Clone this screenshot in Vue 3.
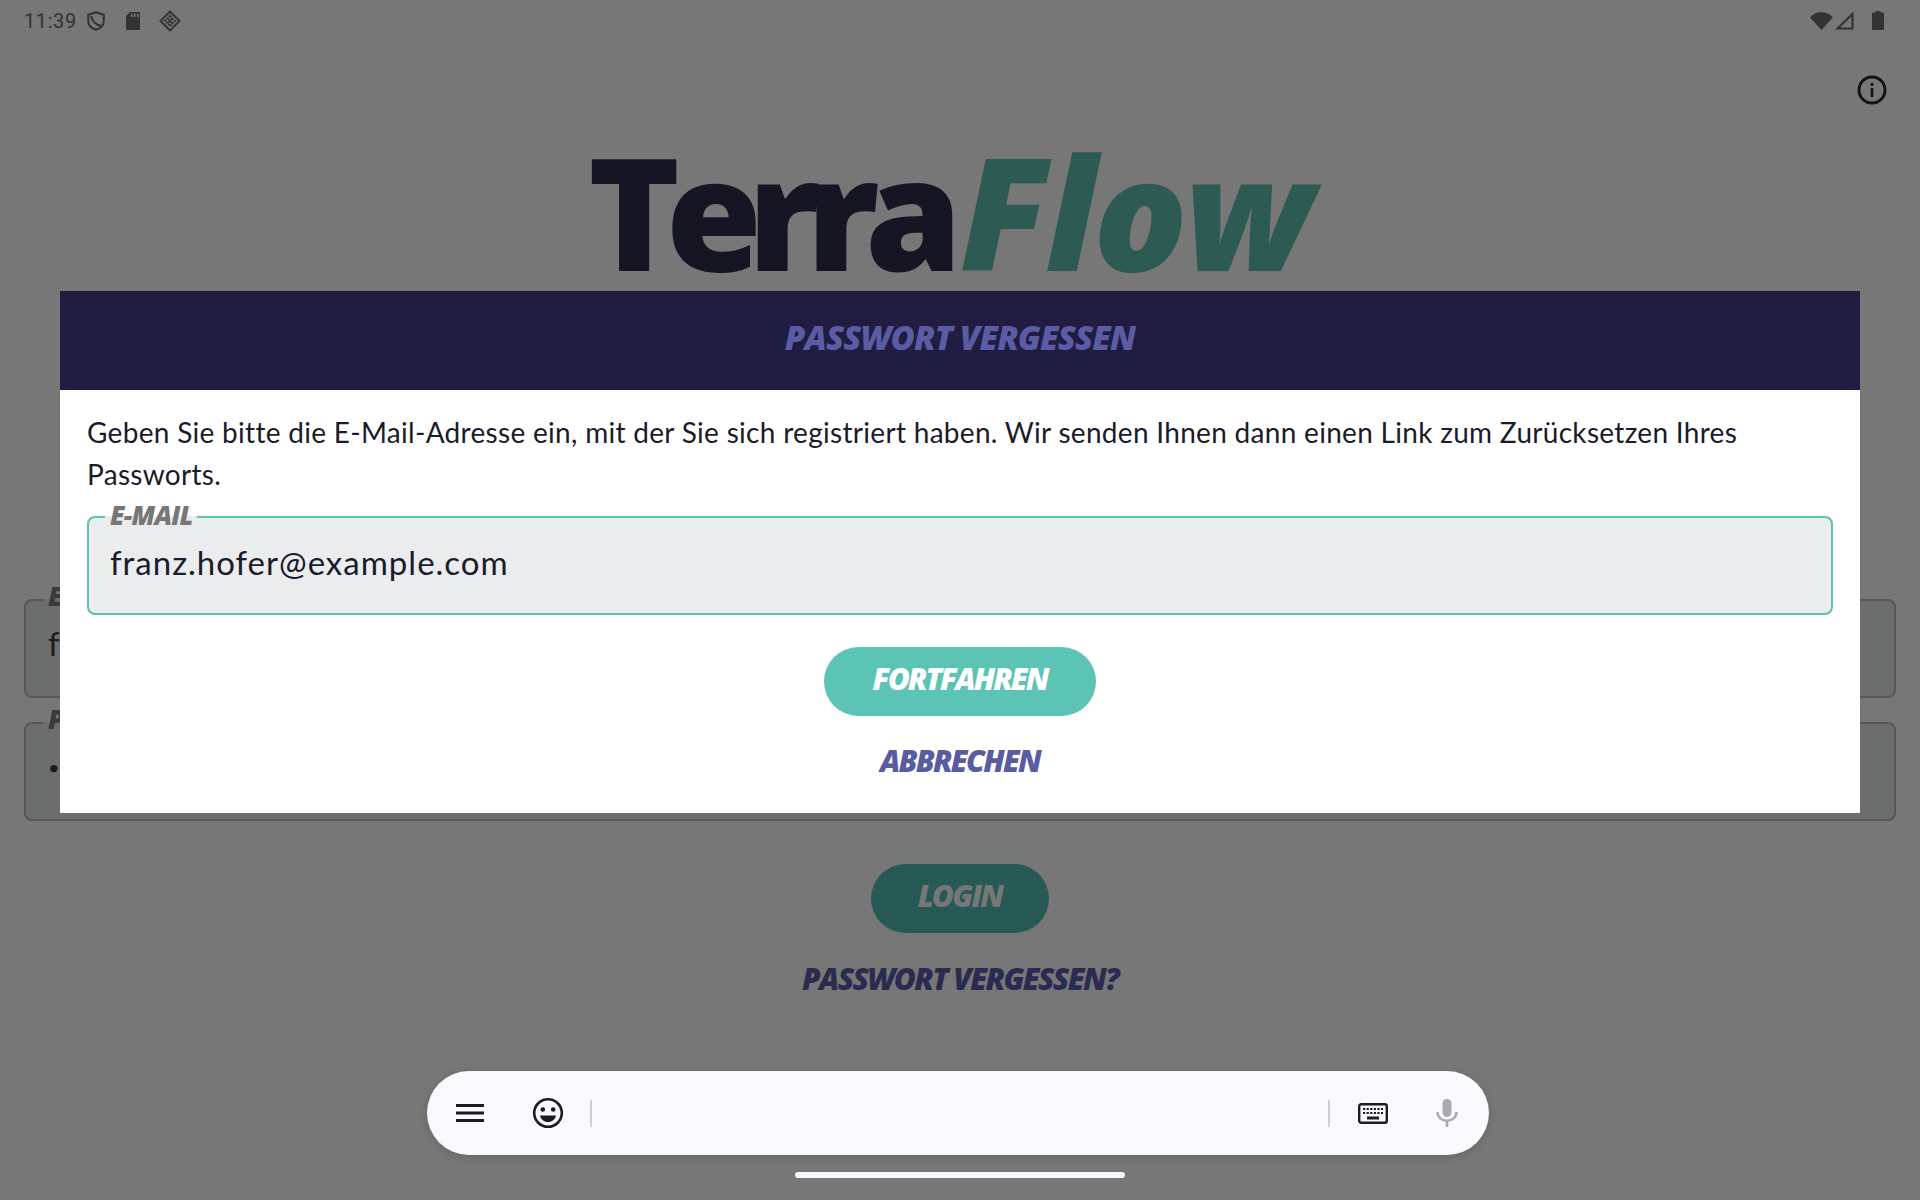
<template>
  <div class="screen">
    <div class="status-bar">
      <span class="time">11:39</span>
      <svg class="st-shield" viewBox="0 0 18 20" width="18" height="20">
        <path d="M9 1.200 16.800 3.800v6.200c0 4.300-3.200 7.500-7.800 8.800C4.400 17.500 1.200 14.300 1.200 10V3.800Z" fill="none" stroke="#333" stroke-width="2" />
        <path d="M4.200 5C5 10 9 14 14.500 15" fill="none" stroke="#333" stroke-width="2" />
      </svg>
      <svg class="st-sd" viewBox="0 0 16 20" width="16" height="20">
        <path d="M5 1h10v18H1V5Z" fill="#333" />
        <rect x="6" y="2.500" width="1.600" height="3.500" fill="#777" />
        <rect x="9" y="2.500" width="1.600" height="3.500" fill="#777" />
        <rect x="12" y="2.500" width="1.600" height="3.500" fill="#777" />
      </svg>
      <svg class="st-diamond" viewBox="0 0 22 22" width="22" height="22">
        <path d="M11 1.500 20.500 11 11 20.500 1.500 11Z" fill="none" stroke="#333" stroke-width="2" stroke-linejoin="round" />
        <path d="M11 6 16 11 11 16 6 11Z" fill="none" stroke="#333" stroke-width="2" stroke-dasharray="2 1" />
        <path d="M8.500 8.500 13.500 13.500M13.500 8.500 8.500 13.500" stroke="#333" stroke-width="1.500" />
      </svg>
      <div class="spacer"></div>
      <svg viewBox="0 0 23 18" width="23" height="18">
        <path d="M0 5.500C3 2 7 .2 11.500 .2S20 2 23 5.500L11.500 18Z" fill="#333" />
      </svg>
      <svg class="st-signal" viewBox="0 0 19 18" width="19" height="18">
        <path d="M17.500 2v14.500H2.500Z" fill="none" stroke="#333" stroke-width="2.200" />
      </svg>
      <svg class="st-battery" viewBox="0 0 12 19" width="12" height="19">
        <path d="M3.500 0h5v1.500H11a1 1 0 0 1 1 1V18a1 1 0 0 1-1 1H1a1 1 0 0 1-1-1V2.500a1 1 0 0 1 1-1h2.500Z" fill="#333" />
      </svg>
    </div>

    <div class="info-row">
      <svg viewBox="0 0 30 30" width="30" height="30">
        <circle cx="15" cy="15" r="13" fill="none" stroke="#111" stroke-width="2.800" />
        <rect x="13.700" y="13" width="2.600" height="9" fill="#111" />
        <rect x="13.700" y="8" width="2.600" height="2.800" fill="#111" />
      </svg>
    </div>

    <div class="logo">
      <span class="terra">Terra</span><span class="flow">Flow</span>
    </div>

    <div class="fields">
      <fieldset class="bg-field">
        <legend>E-MAIL</legend>
        <span>franz.hofer@example.com</span>
      </fieldset>
      <fieldset class="bg-field">
        <legend>PASSWORT</legend>
        <span class="dots">••••••••</span>
      </fieldset>
    </div>

    <button class="login">LOGIN</button>
    <a class="forgot">PASSWORT VERGESSEN?</a>

    <div class="modal">
      <div class="modal-head">PASSWORT VERGESSEN</div>
      <div class="modal-body">
        <p>Geben Sie bitte die E-Mail-Adresse ein, mit der Sie sich registriert haben. Wir senden Ihnen dann einen Link zum Zurücksetzen Ihres Passworts.</p>
        <fieldset class="field">
          <legend>E-MAIL</legend>
          <span>franz.hofer@example.com</span>
        </fieldset>
        <button class="primary">FORTFAHREN</button>
        <a class="cancel">ABBRECHEN</a>
      </div>
    </div>

    <div class="ime-bar">
      <svg class="ime-menu" viewBox="0 0 28 18" width="28" height="18">
        <path d="M0 1.500h28M0 9h28M0 16.500h28" stroke="#1b1b26" stroke-width="3" />
      </svg>
      <svg class="ime-emoji" viewBox="0 0 32 32" width="32" height="32">
        <circle cx="16" cy="16" r="13.800" fill="none" stroke="#1b1b26" stroke-width="2.600" />
        <circle cx="10.800" cy="12.500" r="2.300" fill="#1b1b26" />
        <circle cx="21.200" cy="12.500" r="2.300" fill="#1b1b26" />
        <path d="M8 18.500h16c-.8 4-4 6.500-8 6.500s-7.200-2.500-8-6.500Z" fill="#1b1b26" />
      </svg>
      <span class="ime-sep first"></span>
      <div class="spacer"></div>
      <span class="ime-sep"></span>
      <svg class="ime-kbd" viewBox="0 0 30 21" width="30" height="21">
        <rect x="1.200" y="1.200" width="27.600" height="18.600" rx="2" fill="none" stroke="#1b1b26" stroke-width="2.400" />
        <path d="M5 6h20M5 10h20" stroke="#1b1b26" stroke-width="2.200" stroke-dasharray="2.200 1.400" />
        <rect x="9" y="13.500" width="12" height="3" fill="#1b1b26" />
      </svg>
      <svg class="ime-mic" viewBox="0 0 22 28" width="22" height="28">
        <rect x="6.500" y="0" width="9" height="18" rx="4.500" fill="#a9a9b0" />
        <path d="M1.500 13c0 5.200 4.200 8.800 9.500 8.800s9.500-3.600 9.500-8.800" fill="none" stroke="#a9a9b0" stroke-width="2.400" />
        <rect x="9.700" y="21" width="2.600" height="7" fill="#a9a9b0" />
      </svg>
    </div>
    <div class="home-bar"></div>
  </div>
</template>

<script setup>
</script>

<style>
html, body {
  margin: 0;
  padding: 0;
}
</style>

<style scoped>
.screen {
  position: relative;
  width: 1920px;
  height: 1200px;
  overflow: hidden;
  background: #777;
  display: flex;
  flex-direction: column;
  font-family: "Lato", sans-serif;
}

.spacer { flex: 1; }

/* status bar */
.status-bar {
  height: 42px;
  display: flex;
  align-items: center;
  padding: 0 36px 0 24px;
  color: #333;
}
.time {
  font-family: "Roboto", sans-serif;
  font-size: 20px;
  letter-spacing: 0.6px;
  margin-right: 10px;
}
.st-sd { margin-left: 20px; }
.st-diamond { margin-left: 18px; }
.st-signal { margin-left: 2px; }
.st-battery { margin-left: 18px; margin-top: -2px; }

.info-row {
  display: flex;
  justify-content: flex-end;
  padding: 33px 33px 0 0;
  height: 30px;
}

.logo {
  margin-top: 27px;
  margin-left: 588px;
  height: 158px;
  display: flex;
  align-items: center;
  font-family: "Open Sans", sans-serif;
  font-weight: 800;
  font-size: 156px;
  line-height: 158px;
  white-space: nowrap;
}
.terra {
  color: #161524;
  letter-spacing: -14.500px;
}
.flow {
  color: #2d5a53;
  font-style: italic;
  letter-spacing: -3px;
  margin-left: 12px;
}

/* form behind the dialog */
.fields {
  margin: 0 24px;
  padding-top: 297px;
  display: flex;
  flex-direction: column;
  gap: 12px;
}
.bg-field {
  margin: 0;
  height: 111px;
  box-sizing: border-box;
  padding: 11px 22px 0;
  border: 2px solid #575757;
  border-radius: 8px;
  background: #6c6e6d;
  color: #1c1c1c;
  font-size: 33px;
}
.bg-field legend {
  padding: 0 5px;
  margin-left: -5px;
  font-family: "Open Sans", sans-serif;
  font-weight: 800;
  font-style: italic;
  font-size: 26px;
  line-height: 25px;
  letter-spacing: -0.8px;
  color: #3a3a3a;
  transform: translateY(-3px);
}
.dots {
  display: inline-block;
  font-size: 20px;
  letter-spacing: 4px;
  transform: translateY(-4px);
}

.login {
  align-self: center;
  margin-top: 43px;
  padding: 0 0 6px;
  width: 178px;
  height: 69px;
  border: 0;
  border-radius: 35px;
  background: #285a55;
  color: #777;
  font-family: "Open Sans", sans-serif;
  font-weight: 800;
  font-style: italic;
  font-size: 30px;
  letter-spacing: -1.7px;
}
.forgot {
  align-self: center;
  margin-top: 28px;
  color: #2b2b50;
  font-family: "Open Sans", sans-serif;
  font-weight: 800;
  font-style: italic;
  font-size: 30px;
  line-height: 36px;
  letter-spacing: -1.6px;
}

/* dialog */
.modal {
  position: absolute;
  left: 60px;
  right: 60px;
  top: 291px;
  height: 522px;
  background: #fff;
  display: flex;
  flex-direction: column;
}
.modal-head {
  height: 99px;
  padding-bottom: 6px;
  box-sizing: border-box;
  background: #201c42;
  color: #5b5ca3;
  display: flex;
  align-items: center;
  justify-content: center;
  font-family: "Open Sans", sans-serif;
  font-weight: 800;
  font-style: italic;
  font-size: 33px;
  letter-spacing: -0.8px;
}
.modal-body {
  flex: 1;
  padding: 21px 27px 0;
  display: flex;
  flex-direction: column;
}
.modal-body p {
  margin: 0;
  font-size: 28px;
  line-height: 42px;
  letter-spacing: 0.3px;
  color: #1c1b2a;
}
.field {
  margin: 9px 0 0;
  height: 111px;
  box-sizing: border-box;
  padding: 13px 21px 0;
  border: 2px solid #5ac3b4;
  border-radius: 8px;
  background: #ebecee;
  color: #1c1b2a;
  font-size: 33px;
  letter-spacing: 1px;
}
.field legend {
  padding: 0 5px;
  margin-left: -5px;
  font-family: "Open Sans", sans-serif;
  font-weight: 800;
  font-style: italic;
  font-size: 26px;
  line-height: 25px;
  letter-spacing: -0.8px;
  color: #777;
  transform: translateY(-1px);
}
.primary {
  align-self: center;
  margin-top: 32px;
  padding: 0 0 7px;
  width: 272px;
  height: 69px;
  border: 0;
  border-radius: 35px;
  background: #5cc4b4;
  color: #fff;
  font-family: "Open Sans", sans-serif;
  font-weight: 800;
  font-style: italic;
  font-size: 30px;
  letter-spacing: -1.9px;
}
.cancel {
  align-self: center;
  margin-top: 27px;
  color: #5a5ca0;
  font-family: "Open Sans", sans-serif;
  font-weight: 800;
  font-style: italic;
  font-size: 30px;
  line-height: 36px;
  letter-spacing: -1.7px;
}

/* on-screen keyboard bar */
.ime-bar {
  position: absolute;
  left: 427px;
  top: 1071px;
  width: 1062px;
  height: 84px;
  border-radius: 42px;
  background: #f9f8ff;
  box-shadow: 0 2px 10px rgba(0, 0, 0, 0.15);
  display: flex;
  align-items: center;
  padding: 0 31px 0 29px;
  box-sizing: border-box;
}
.ime-emoji { margin-left: 48px; }
.ime-sep {
  width: 2px;
  height: 27px;
  background: #cfcfdc;
}
.ime-sep.first { margin-left: 26px; }
.ime-kbd { margin-left: 28px; }
.ime-mic { margin-left: 48px; }

.home-bar {
  position: absolute;
  left: 795px;
  top: 1172px;
  width: 330px;
  height: 6px;
  border-radius: 3px;
  background: #f9f8ff;
}
</style>
